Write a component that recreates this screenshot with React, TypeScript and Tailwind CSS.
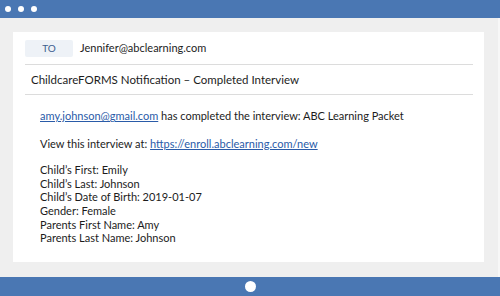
export default function App() {
  const details = [
    "Child’s First: Emily",
    "Child’s Last: Johnson",
    "Child’s Date of Birth: 2019-01-07",
    "Gender: Female",
    "Parents First Name: Amy",
    "Parents Last Name: Johnson",
  ];

  return (
    <div
      className="w-[500px] h-[296px] flex flex-col bg-[#efefef] text-[#1c1c1c]"
      style={{ fontFamily: "Lato, 'Open Sans', sans-serif" }}
    >
      {/* window title bar */}
      <div className="h-[18px] bg-[#4a77b3] flex items-center gap-[7px] pl-[5px]">
        <span className="w-[6px] h-[6px] rounded-full bg-white" />
        <span className="w-[6px] h-[6px] rounded-full bg-white" />
        <span className="w-[6px] h-[6px] rounded-full bg-white" />
      </div>

      <div className="flex-1 flex border-r-2 border-[#f7f7f7] pt-[14px] pb-[15px] pl-[13px] pr-[14px]">
        <div className="flex-1 bg-white pl-[12px] pr-[11px] pt-[8px]">
          <div className="flex items-center pb-[7px] border-b border-[#dcdcdc]">
            <div className="w-[48px] h-[17px] bg-[#eef2f7] rounded-[2px] flex items-center justify-center text-[10px] text-[#3d5f8f]">
              TO
            </div>
            <span className="ml-[7px] text-[11px]">Jennifer@abclearning.com</span>
          </div>
          <div className="h-[30px] flex items-center border-b border-[#dcdcdc] pl-[6px] text-[11.5px]">
            ChildcareFORMS Notification – Completed Interview
          </div>

          <div className="pl-[15px] pt-[14px] text-[11px] leading-[13.6px]">
            <p>
              <span className="text-[#2a5ba8] underline">amy.johnson@gmail.com</span> has completed
              the interview: ABC Learning Packet
            </p>
            <p className="mt-[14px]">
              View this interview at:{" "}
              <span className="text-[#2a5ba8] underline">https://enroll.abclearning.com/new</span>
            </p>
            <div className="mt-[13px]">
              {details.map((d) => (
                <p key={d}>{d}</p>
              ))}
            </div>
          </div>
        </div>
      </div>

      {/* bottom bar */}
      <div className="h-[19px] bg-[#4a77b3] flex items-center justify-center">
        <span className="w-[11px] h-[11px] rounded-full bg-white" />
      </div>
    </div>
  );
}
